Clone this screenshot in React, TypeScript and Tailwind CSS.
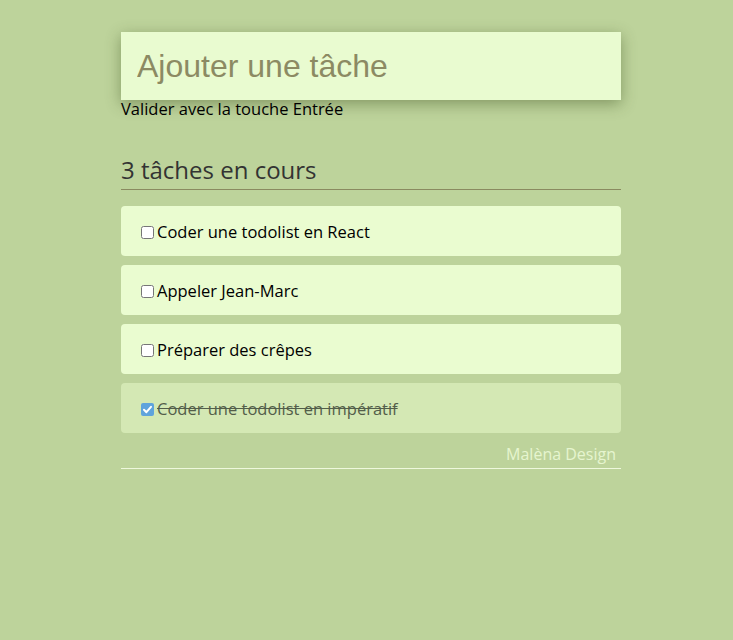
import React from "react";

const tasks = [
  { text: "Coder une todolist en React", done: false },
  { text: "Appeler Jean-Marc", done: false },
  { text: "Préparer des crêpes", done: false },
  { text: "Coder une todolist en impératif", done: true },
];

export default function App() {
  return (
    <div className="min-h-[640px] w-full bg-[#bdd39b] pt-8" style={{ fontFamily: '"Open Sans", sans-serif' }}>
      <div className="ml-[121px] w-[500px]">
        <input
          className="block h-[68px] w-full bg-[#e9fbd0] px-4 text-[32px] text-[#8c8a63] placeholder:text-[#8c8a63] shadow-[0_4px_14px_rgba(60,80,30,0.45)] outline-none"
          style={{ fontFamily: '"Liberation Sans", Arial, sans-serif' }}
          placeholder="Ajouter une tâche"
        />
        <p className="mt-0 text-[16.5px] leading-[18px] text-black">Valider avec la touche Entrée</p>
        <h2 className="mt-[39px] border-b border-[#8a8a60] pb-[6px] text-[24px] leading-[26px] text-[#333]">
          3 tâches en cours
        </h2>
        <ul className="mt-4 flex flex-col gap-[9px]">
          {tasks.map((t) => (
            <li
              key={t.text}
              className={`flex h-[50px] items-center rounded-[4px] px-5 pt-[2px] ${t.done ? "bg-[#d4e8b4]" : "bg-[#eafcd0]"}`}
            >
              {t.done ? (
                <span className="mr-[3px] flex h-[13px] w-[13px] items-center justify-center rounded-[2px] bg-[#5fa3dc]">
                  <svg viewBox="0 0 13 13" className="h-[13px] w-[13px]">
                    <path d="M3 6.8 L5.4 9.2 L10 3.8" fill="none" stroke="white" strokeWidth="2" strokeLinecap="round" strokeLinejoin="round" />
                  </svg>
                </span>
              ) : (
                <input type="checkbox" className="m-0 mr-[3px] h-[13px] w-[13px]" />
              )}
              <span
                className={`text-[16.5px] ${t.done ? "text-[#535e4a] line-through decoration-[#535e4a]" : "text-black"}`}
              >
                {t.text}
              </span>
            </li>
          ))}
        </ul>
        <div className="mt-[11px] border-b border-[#eef8dc] pb-[4px] pr-[5px] text-right text-[16px] leading-[20px] text-[#e6f5cf]">
          Malèna Design
        </div>
      </div>
    </div>
  );
}
